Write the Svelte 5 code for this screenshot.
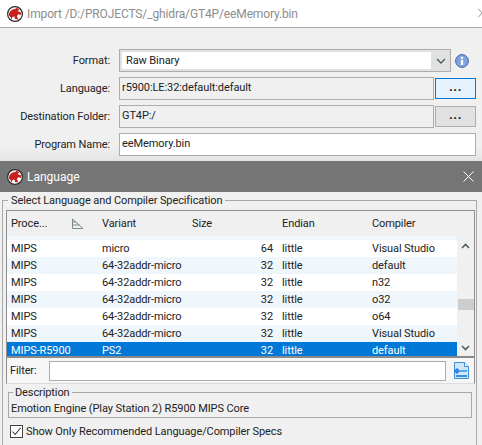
<script>
  const rows = [
    { proc: 'MIPS', variant: 'micro', size: 64, endian: 'little', compiler: 'Visual Studio' },
    { proc: 'MIPS', variant: '64-32addr-micro', size: 32, endian: 'little', compiler: 'default' },
    { proc: 'MIPS', variant: '64-32addr-micro', size: 32, endian: 'little', compiler: 'n32' },
    { proc: 'MIPS', variant: '64-32addr-micro', size: 32, endian: 'little', compiler: 'o32' },
    { proc: 'MIPS', variant: '64-32addr-micro', size: 32, endian: 'little', compiler: 'o64' },
    { proc: 'MIPS', variant: '64-32addr-micro', size: 32, endian: 'little', compiler: 'Visual Studio' },
    { proc: 'MIPS-R5900', variant: 'PS2', size: 32, endian: 'little', compiler: 'default', selected: true }
  ];
</script>

{#snippet logo()}
  <svg class="logo" width="16" height="16" viewBox="0 0 16 16">
    <circle cx="8" cy="8" r="7.4" fill="#fff" stroke="#2b2b2b" stroke-width="1.2" />
    <path d="M1.8 9.5 C1.8 6 4.5 3.2 8 3 L9.5 1.8 L12.5 3.5 L10.5 5 L14 6.5 L14.2 9 L11 8.2 L10 10.5 L11.5 13.5 L8 13 L7.5 10.5 L5.5 11 L4.5 13.5 L3.5 11 Z" fill="#c8201c" />
  </svg>
{/snippet}

<div class="page">
  <header class="title-bar">
    {@render logo()}
    <span class="title">Import /D:/PROJECTS/_ghidra/GT4P/eeMemory.bin</span>
    <svg class="cut-close" width="4" height="10" viewBox="0 0 4 10"><path d="M0 0.5 L4 5 L0 9.5" fill="none" stroke="#999" /></svg>
  </header>

  <section class="import-form">
    <div class="form-row format-row">
      <span class="label">Format:</span>
      <div class="combo">
        <span class="combo-value">Raw Binary</span>
        <span class="combo-arrow">
          <svg width="10" height="6" viewBox="0 0 10 6"><path d="M1 1 L5 5 L9 1" fill="none" stroke="#4a5a58" stroke-width="1.3" /></svg>
        </span>
      </div>
      <svg class="info" width="14" height="14" viewBox="0 0 14 14">
        <circle cx="7" cy="7" r="6.4" fill="#7fa2de" stroke="#3f66b0" />
        <rect x="5.8" y="6" width="2.4" height="5" fill="#fff" />
        <rect x="5.8" y="2.8" width="2.4" height="2" fill="#fff" />
      </svg>
    </div>
    <div class="form-row">
      <span class="label">Language:</span>
      <div class="field readonly">r5900:LE:32:default:default</div>
      <button class="dots focused">...</button>
    </div>
    <div class="form-row">
      <span class="label">Destination Folder:</span>
      <div class="field readonly">GT4P:/</div>
      <button class="dots">...</button>
    </div>
    <div class="form-row">
      <span class="label">Program Name:</span>
      <div class="field name">eeMemory.bin</div>
    </div>
  </section>

  <header class="dialog-bar">
    {@render logo()}
    <span class="dialog-title">Language</span>
    <svg class="close" width="11" height="11" viewBox="0 0 11 11"><path d="M0.5 0.5 L10.5 10.5 M10.5 0.5 L0.5 10.5" stroke="#fff" stroke-width="1" /></svg>
  </header>

  <section class="dialog-body">
    <fieldset class="group">
      <legend>Select Language and Compiler Specification</legend>
      <div class="inner">
        <div class="table-wrap">
          <div class="table">
            <div class="thead">
              <span class="proc-head">Proce...
                <svg width="13" height="12" viewBox="0 0 13 12"><path d="M1.5 1 V10.5 H12 L1.5 1 M1.5 4 H5 M1.5 7 H8.5" fill="none" stroke="#7b8a8a" /></svg>
              </span>
              <span>Variant</span>
              <span>Size</span>
              <span>Endian</span>
              <span>Compiler</span>
            </div>
            <div class="tbody">
              <div class="peek"></div>
              {#each rows as row, i}
                <div class="row" class:alt={i % 2 === 1} class:selected={row.selected}>
                  <span>{row.proc}</span>
                  <span>{row.variant}</span>
                  <span class="num">{row.size}</span>
                  <span>{row.endian}</span>
                  <span>{row.compiler}</span>
                </div>
              {/each}
            </div>
          </div>
          <div class="scrollbar">
            <svg class="up" width="9" height="6" viewBox="0 0 9 6"><path d="M1 5 L4.5 1.5 L8 5" fill="none" stroke="#506060" stroke-width="1.6" /></svg>
            <div class="thumb"></div>
            <svg class="down" width="9" height="6" viewBox="0 0 9 6"><path d="M1 1 L4.5 4.5 L8 1" fill="none" stroke="#506060" stroke-width="1.6" /></svg>
          </div>
        </div>
        <div class="filter-row">
          <span class="filter-label">Filter:</span>
          <div class="filter-input"></div>
          <svg class="filter-icon" width="16" height="17" viewBox="0 0 16 17">
            <path d="M1.5 0.5 H11.5 L15.5 4.5 V16.5 H1.5 Z" fill="#cfe6fa" stroke="#3d8fd8" />
            <path d="M11.5 0.5 V4.5 H15.5" fill="#fff" stroke="#3d8fd8" />
            <path d="M0.5 9 L4 6 L7.5 9 L4 12 Z" fill="#2f86dc" />
            <rect x="6" y="8" width="8" height="2" fill="#5aa6e8" />
            <rect x="3" y="13" width="11" height="2" fill="#3d8fd8" />
          </svg>
        </div>
      </div>
      <fieldset class="description">
        <legend>Description</legend>
        <div class="desc-text">Emotion Engine (Play Station 2) R5900 MIPS Core</div>
      </fieldset>
      <label class="recommend">
        <span class="check">
          <svg width="13" height="13" viewBox="0 0 13 13"><path d="M2.5 6.5 L5.2 9.5 L10.5 3" fill="none" stroke="#333" stroke-width="1.1" /></svg>
        </span>
        Show Only Recommended Language/Compiler Specs
      </label>
    </fieldset>
  </section>
</div>

<style>
  :global(body) {
    margin: 0;
    background: #f0f0f0;
  }

  .page {
    width: 482px;
    height: 445px;
    overflow: hidden;
    display: flex;
    flex-direction: column;
    font-family: Roboto, "Noto Sans", sans-serif;
    font-size: 11px;
    letter-spacing: -0.1px;
    color: #222;
    white-space: nowrap;
  }

  /* Import window */
  .title-bar {
    height: 27px;
    flex: none;
    background: #fff;
    border-bottom: 1px solid #aaa;
    display: flex;
    align-items: center;
    padding-left: 7px;
    gap: 4px;
  }

  .logo {
    flex: none;
  }

  .title {
    flex: 1;
    font-size: 12px;
    letter-spacing: -0.13px;
    color: #8c8c8c;
  }

  .cut-close {
    flex: none;
    margin-top: -2px;
  }

  .import-form {
    height: 133px;
    flex: none;
    box-sizing: border-box;
    padding-top: 21px;
    background: linear-gradient(#f0f0f0 118px, #e4e4e4);
    display: flex;
    flex-direction: column;
    gap: 5px;
  }

  .form-row {
    display: flex;
    align-items: center;
    height: 23px;
  }

  .label {
    width: 110px;
    text-align: right;
    margin-right: 9px;
    flex: none;
  }

  .combo {
    width: 332px;
    height: 23px;
    box-sizing: border-box;
    border: 1px solid #adadad;
    background: #e1e1e1;
    display: flex;
    padding: 2px 0 2px 2px;
  }

  .combo-value {
    width: 309px;
    flex: none;
    background: #fff;
    padding-left: 4px;
    box-sizing: border-box;
    line-height: 17px;
  }

  .combo-arrow {
    flex: 1;
    display: flex;
    align-items: center;
    justify-content: center;
  }

  .info {
    margin-left: 4px;
  }

  .field {
    height: 23px;
    box-sizing: border-box;
    border: 1px solid #adadad;
    padding-left: 2px;
    line-height: 20px;
  }

  .readonly {
    width: 315px;
    background: #f0f0f0;
  }

  .name {
    width: 357px;
    background: #fff;
  }

  .dots {
    width: 41px;
    height: 21px;
    margin-left: 1px;
    padding: 0 0 6px;
    font-family: inherit;
    font-size: 13px;
    font-weight: 700;
    letter-spacing: 0.5px;
    color: #111;
    background: #e1e1e1;
    border: 1px solid #adadad;
  }

  .focused {
    background: #e5f1fb;
    border-color: #0078d7;
  }

  /* Language dialog */
  .dialog-bar {
    height: 31px;
    flex: none;
    background: #757575;
    display: flex;
    align-items: center;
    padding: 0 6px 0 7px;
    gap: 4px;
  }

  .dialog-title {
    flex: 1;
    font-size: 12px;
    letter-spacing: 0;
    color: #fff;
  }

  .close {
    margin-right: 2px;
  }

  .dialog-body {
    flex: 1;
    background: #f0f0f0;
    padding: 2px 5px 0 2px;
  }

  .group {
    margin: 0;
    padding: 3px 1px 0 3px;
    border: 1px solid #a8a8a8;
    border-bottom: 0;
    height: 260px;
    box-sizing: border-box;
  }

  .group > legend {
    margin-left: 2px;
    padding: 0 3px;
    line-height: 13px;
  }

  .inner {
    border: 1px solid #8f8f8f;
    border-bottom: 1px solid #dcdcdc;
  }

  .table-wrap {
    display: flex;
    height: 145px;
    border-bottom: 2px solid #8a8a8a;
  }

  .table {
    width: 450px;
    flex: none;
  }

  .thead,
  .row {
    display: grid;
    grid-template-columns: 91px 90px 90px 90px 1fr;
  }

  .thead {
    height: 25px;
    align-items: center;
  }

  .thead span,
  .row span {
    padding-left: 4px;
  }

  .thead .proc-head {
    display: flex;
    align-items: center;
    justify-content: space-between;
    padding-right: 14px;
  }

  .tbody {
    height: 120px;
    overflow: hidden;
    background: #fff;
  }

  .peek {
    height: 4px;
    background: #eff6fc;
  }

  .row {
    height: 17px;
    line-height: 18px;
    background: #fff;
  }

  .row.alt {
    background: #eff6fc;
  }

  .row.selected {
    background: #0078d7;
    color: #fff;
  }

  .row .num {
    text-align: right;
    padding-right: 5px;
  }

  .scrollbar {
    flex: 1;
    position: relative;
    background: #f0f0f0;
  }

  .up,
  .down {
    position: absolute;
    left: 4px;
  }

  .up {
    top: 32px;
  }

  .down {
    bottom: 5px;
  }

  .thumb {
    position: absolute;
    top: 88px;
    left: 1px;
    right: 0;
    height: 11px;
    background: #cdcdcd;
  }

  .filter-row {
    display: flex;
    align-items: center;
    height: 25px;
    padding-left: 3px;
    background: #f6f6f6;
  }

  .filter-label {
    width: 39px;
    flex: none;
  }

  .filter-input {
    width: 397px;
    height: 20px;
    box-sizing: border-box;
    border: 1px solid #adadad;
    background: #fff;
    flex: none;
  }

  .filter-icon {
    margin-left: 7px;
    flex: none;
  }

  .description {
    margin: 2px 3px 0 2px;
    padding: 0 0 0 2px;
    height: 32px;
    box-sizing: border-box;
    border: 1px solid #a8a8a8;
  }

  .description > legend {
    margin-left: 2px;
    padding: 0 2px;
    line-height: 13px;
  }

  .desc-text {
    line-height: 19px;
  }

  .recommend {
    display: flex;
    align-items: center;
    gap: 3px;
    margin: 6px 0 0 4px;
    height: 14px;
  }

  .check {
    width: 13px;
    height: 13px;
    box-sizing: border-box;
    border: 1px solid #444;
    background: #fff;
    display: flex;
  }

  .check svg {
    margin: -1px;
    flex: none;
  }
</style>
